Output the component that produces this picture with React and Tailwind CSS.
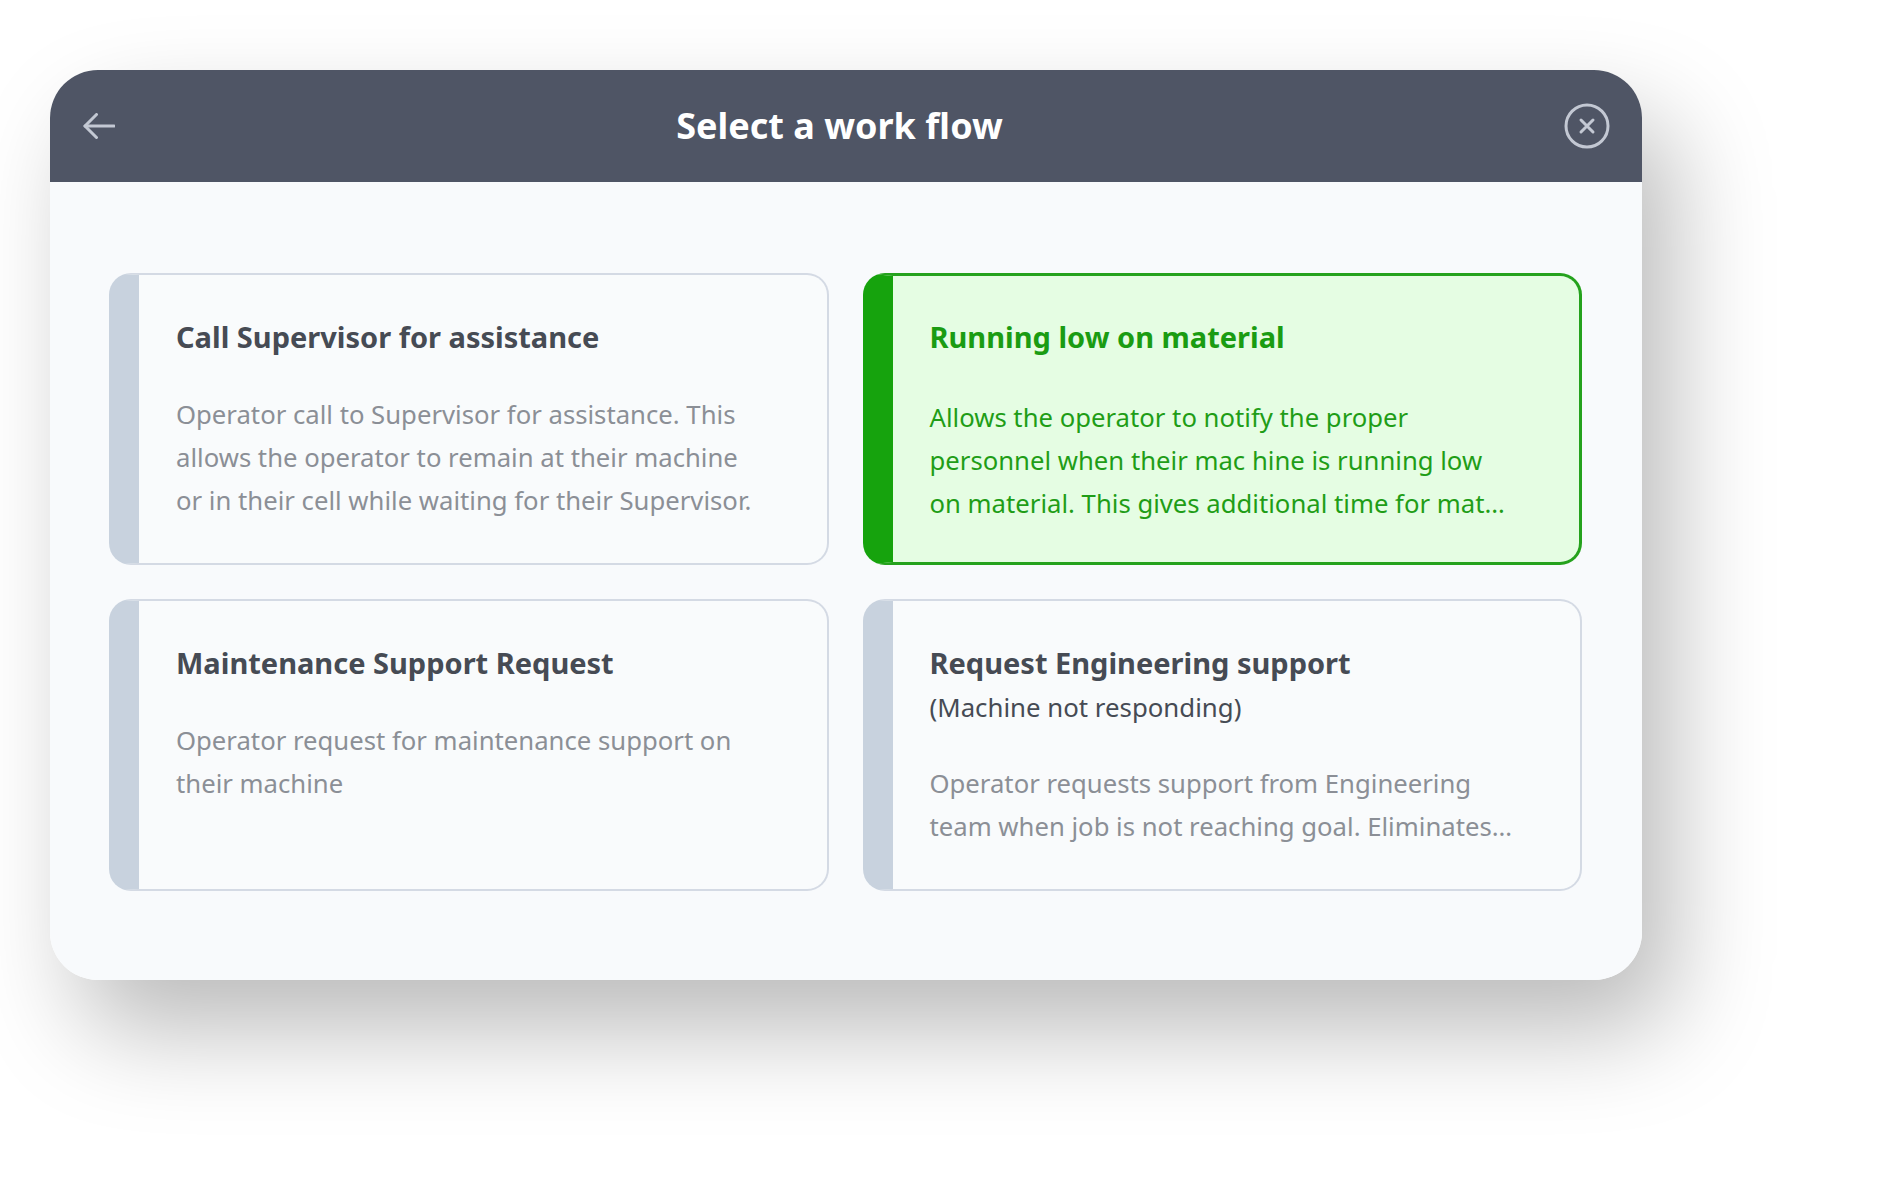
import React from "react";

function ArrowLeftIcon() {
  return (
    <svg width="32" height="26" viewBox="0 0 32 26" fill="none" stroke="#c3c8d3" strokeWidth="3" strokeLinecap="round" strokeLinejoin="round">
      <path d="M2 13H31" />
      <path d="M13.5 1.5L2 13l11.5 11.5" />
    </svg>
  );
}

function CloseIcon() {
  return (
    <svg width="46" height="46" viewBox="0 0 46 46" fill="none" stroke="#c3c8d3" strokeWidth="3" strokeLinecap="round">
      <circle cx="23" cy="23" r="21" />
      <path d="M17 17l12 12M29 17L17 29" />
    </svg>
  );
}

function GrayCard({ title, subtitle, lines }) {
  return (
    <div className="box-border h-[292px] rounded-[22px] border-2 border-[#d4dae4] border-l-[30px] border-l-[#c8d2de] bg-[#f9fbfc] pl-[37px] pt-[42px]">
      <div className="text-[29px] leading-[40px] font-bold text-[#464b54] whitespace-nowrap">{title}</div>
      {subtitle && (
        <div className="mt-[3px] text-[25.8px] leading-[43px] text-[#464b54] whitespace-nowrap">{subtitle}</div>
      )}
      <div className={(subtitle ? "mt-[33px]" : "mt-[36px]") + " text-[25.7px] leading-[43px] text-[#8b8f96]"}>
        {lines.map((l, i) => (
          <div key={i} className="whitespace-nowrap">{l}</div>
        ))}
      </div>
    </div>
  );
}

function GreenCard({ title, lines }) {
  return (
    <div className="box-border h-[292px] rounded-[22px] border-[3px] border-[#25a21d] border-l-[30px] border-l-[#16a30d] bg-[#e5fde3] pl-[37px] pt-[41px]">
      <div className="text-[29px] leading-[40px] font-bold text-[#1a9c12] whitespace-nowrap">{title}</div>
      <div className="mt-[39px] text-[25.7px] leading-[43px] text-[#1f9d17]">
        {lines.map((l, i) => (
          <div key={i} className="whitespace-nowrap">{l}</div>
        ))}
      </div>
    </div>
  );
}

export default function App() {
  return (
    <div className="min-h-[1194px] w-full bg-white font-['Noto_Sans',sans-serif] pt-[70px] pl-[50px]">
      <div className="w-[1592px] rounded-[48px] shadow-[30px_50px_100px_rgba(0,0,0,0.27)]">
        <div className="h-[112px] rounded-t-[48px] bg-[#4f5565] flex items-center pl-[33px] pr-[32px]">
          <ArrowLeftIcon />
          <div className="flex-1 text-center text-[36px] font-bold text-white leading-none">Select a work flow</div>
          <CloseIcon />
        </div>
        <div className="rounded-b-[48px] bg-[#f8fafc] pl-[59px] pr-[60px] pt-[91px] pb-[89px]">
          <div className="grid grid-cols-2 gap-[34px]">
            <GrayCard
              title="Call Supervisor for assistance"
              lines={[
                "Operator call to Supervisor for assistance. This",
                "allows the operator to remain at their machine",
                "or in their cell while waiting for their Supervisor.",
              ]}
            />
            <GreenCard
              title="Running low on material"
              lines={[
                "Allows the operator to notify the proper",
                "personnel when their mac hine is running low",
                "on material. This gives additional time for mat\u2026",
              ]}
            />
            <GrayCard
              title="Maintenance Support Request"
              lines={["Operator request for maintenance support on", "their machine"]}
            />
            <GrayCard
              title="Request Engineering support"
              subtitle="(Machine not responding)"
              lines={[
                "Operator requests support from Engineering",
                "team when job is not reaching goal. Eliminates\u2026",
              ]}
            />
          </div>
        </div>
      </div>
    </div>
  );
}
